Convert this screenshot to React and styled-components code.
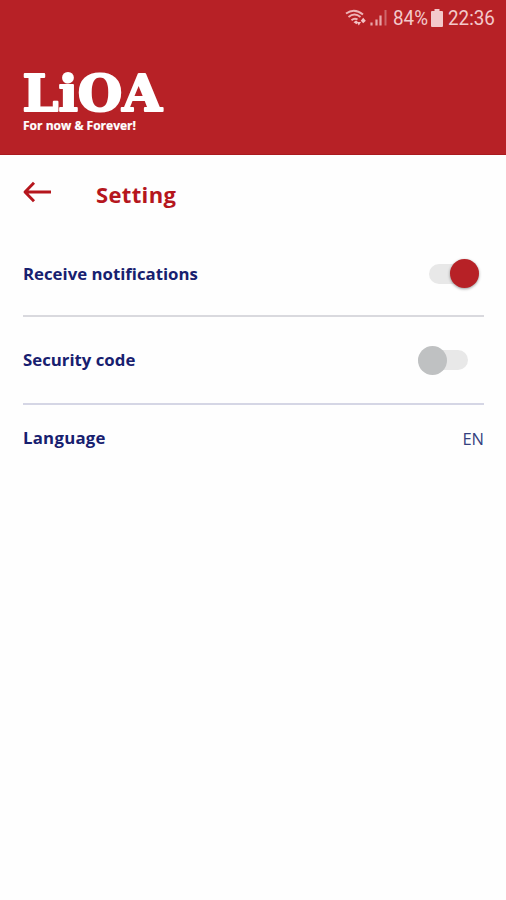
import React, { useState } from 'react';
import styled, { createGlobalStyle } from 'styled-components';

const StatusBar = () => (
    <Status>
        <svg width='48' height='22' viewBox='0 0 48 22' fill='none'>
            <g stroke='#eeb4b7' strokeWidth='1.900'>
                <path d='M1 6.500Q9.500 0.500 18 7.500' />
                <path d='M3.500 10Q9.500 5 15.500 10' />
                <path d='M6.500 13.300Q9.500 10.500 12.500 12.500' />
            </g>
            <path d='M8.500 15.300L11 13.500L13 15L11.500 17.200Z' fill='#f3c3c5' />
            <path d='M11.700 15H16L13.800 18.500Z' fill='#f3c3c5' />
            <path d='M15.800 13.700L18.200 10.800L20.800 13.700L18.200 16.300Z' fill='#f3c3c5' />
            <path d='M26.500 15.500V18.500M31.500 12.500V18.500M35.500 8.500V18.500' stroke='#e8a5a8' strokeWidth='2.200' />
            <path d='M40.500 3V18.500' stroke='#cd666a' strokeWidth='2' />
        </svg>
        <StatusText $width={35}>84%</StatusText>
        <Battery viewBox='0 0 12 18'>
            <path d='M3.500 0H8.500V2H11Q12 2 12 3V17Q12 18 11 18H1Q0 18 0 17V3Q0 2 1 2H3.500Z' fill='#f3c9cb' />
        </Battery>
        <StatusText $width={48}>22:36</StatusText>
    </Status>
);

const Logo = () => (
    <LogoMark viewBox='0 0 146 64'>
        <text className='brand' x='0.500' y='40' textLength='139.500' lengthAdjust='spacingAndGlyphs'>LiOA</text>
        <text className='slogan' x='1' y='58.500' textLength='113' lengthAdjust='spacingAndGlyphs'>For now &amp; Forever!</text>
    </LogoMark>
);

const App = () => {
    const [notifications, setNotifications] = useState(true);
    const [security, setSecurity] = useState(false);

    return (
        <Screen>
            <GlobalStyle />
            <Header>
                <StatusBar />
                <Logo />
            </Header>
            <TitleBar>
                <BackButton aria-label='Back'>
                    <svg width='30' height='22' viewBox='0 0 30 22' fill='none' stroke='#b5161d' strokeWidth='2.900' strokeLinejoin='round'>
                        <path d='M29 11H3.500M12 1.800L3 11L12 20.200' />
                    </svg>
                </BackButton>
                <Title>Setting</Title>
            </TitleBar>
            <Settings>
                <Row $height={85} $line='#d9d9de'>
                    <Label>Receive notifications</Label>
                    <Switch
                        role='switch'
                        aria-checked={notifications}
                        aria-label='Receive notifications'
                        $on={notifications}
                        onClick={() => setNotifications(!notifications)}
                    />
                </Row>
                <Row $height={88} $line='#d5d6e5'>
                    <Label>Security code</Label>
                    <Switch
                        role='switch'
                        aria-checked={security}
                        aria-label='Security code'
                        $on={security}
                        onClick={() => setSecurity(!security)}
                    />
                </Row>
                <Row $height={66}>
                    <Label $spacing={0.25}>Language</Label>
                    <Value>EN</Value>
                </Row>
            </Settings>
        </Screen>
    )
}

export default App;

const GlobalStyle = createGlobalStyle`
    * {
        box-sizing: border-box;
    }
    body {
        margin: 0;
        background: #fefefe;
    }
    button {
        border: none;
        padding: 0;
        background: none;
        cursor: pointer;
    }
`

const Screen = styled.div`
    width: 100%;
    height: 900px;
    background: #fefefe;
    font-family: 'Open Sans', sans-serif;
`

const Header = styled.header`
    display: flex;
    flex-direction: column;
    height: 155px;
    background: #b72126;
    border-bottom: 1px solid #a91a1f;
`

const Status = styled.div`
    display: flex;
    justify-content: flex-end;
    height: 36px;
    padding: 7px 10px 0 0;

    svg {
        flex: none;
    }
`

const StatusText = styled.span`
    width: ${props => props.$width}px;
    font-family: Roboto, sans-serif;
    font-size: 20px;
    line-height: 22px;
    color: #f3c9cb;
    white-space: nowrap;
    transform: scaleX(0.94);
    transform-origin: left;
`

const Battery = styled.svg`
    width: 12px;
    height: 18px;
    margin: 2px 5px 0 3px;
`

const LogoMark = styled.svg`
    width: 146px;
    height: 64px;
    margin: 35px 0 0 22px;
    fill: #fff;
    overflow: visible;

    .brand {
        font-family: 'DejaVu Serif', serif;
        font-size: 51px;
        font-weight: 700;
        stroke: #fff;
        stroke-width: 2.2;
        stroke-linejoin: round;
    }
    .slogan {
        font-family: 'Open Sans', sans-serif;
        font-size: 11.5px;
        font-weight: 700;
        stroke: #fff;
        stroke-width: 0.2;
    }
`

const TitleBar = styled.div`
    display: flex;
    align-items: center;
    height: 77px;
    padding: 0 22px;
`

const BackButton = styled.button`
    width: 74px;
    height: 22px;
    margin-top: -4px;
    text-align: left;

    svg {
        display: block;
    }
`

const Title = styled.h1`
    margin: 0;
    font-size: 22px;
    font-weight: 700;
    line-height: 30px;
    letter-spacing: 0.35px;
    color: #b5161d;
`

const Settings = styled.div`
    padding: 0 22px 0 23px;
`

const Row = styled.div`
    display: flex;
    align-items: center;
    justify-content: space-between;
    height: ${props => props.$height}px;
    border-bottom: ${props => props.$line ? `2px solid ${props.$line}` : 'none'};
`

const Label = styled.span`
    font-size: 16.8px;
    font-weight: 700;
    line-height: 24px;
    letter-spacing: ${props => props.$spacing || 0}px;
    color: #17206f;
`

const Value = styled.span`
    margin-top: 1px;
    font-size: 16.5px;
    line-height: 24px;
    color: #34417f;
`

const Switch = styled.button`
    display: grid;
    align-items: center;
    justify-items: ${props => props.$on ? 'end' : 'start'};
    width: 50px;
    height: 30px;
    margin-right: ${props => props.$on ? '5px' : '16px'};

    &::before,
    &::after {
        content: '';
        grid-area: 1 / 1;
    }
    &::before {
        width: 100%;
        height: 20px;
        border-radius: 10px;
        background: #e8e8e8;
    }
    &::after {
        width: 29px;
        height: 29px;
        border-radius: 50%;
        background: ${props => props.$on ? '#b72126' : '#bfc1c2'};
        box-shadow: ${props => props.$on ? '0 1px 3px rgba(0, 0, 0, 0.4)' : 'none'};
    }
`
